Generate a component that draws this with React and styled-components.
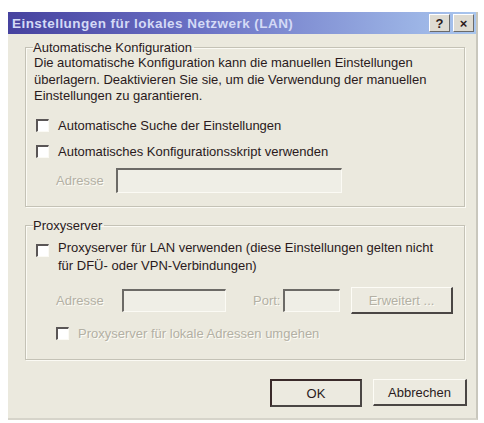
import React from "react";
import styled, { createGlobalStyle } from "styled-components";

const GlobalStyle = createGlobalStyle`
  html, body {
    margin: 0;
    padding: 0;
    background: #ffffff;
  }
  body {
    font-family: "Liberation Sans", Arial, sans-serif;
    font-size: 13px;
  }
`;

const App = () => {
  return (
    <>
      <GlobalStyle />
      <Page>
        <Dialog>
          <TitleBar>
            <TitleText>Einstellungen für lokales Netzwerk (LAN)</TitleText>
            <TitleButtons>
              <CaptionButton>?</CaptionButton>
              <CaptionButton>×</CaptionButton>
            </TitleButtons>
          </TitleBar>

          <Body>
            <Group height="167px">
              <Legend>Automatische Konfiguration</Legend>
              <Description>
                Die automatische Konfiguration kann die manuellen Einstellungen
                überlagern. Deaktivieren Sie sie, um die Verwendung der manuellen
                Einstellungen zu garantieren.
              </Description>
              <CheckRow marginTop="13px">
                <CheckBox />
                <Label>Automatische Suche der Einstellungen</Label>
              </CheckRow>
              <CheckRow marginTop="10px">
                <CheckBox />
                <Label>Automatisches Konfigurationsskript verwenden</Label>
              </CheckRow>
              <FieldRow marginTop="8px" indent="22px">
                <DisabledLabel width="60px">Adresse</DisabledLabel>
                <TextField width="226px" height="25px" />
              </FieldRow>
            </Group>

            <Group height="142px" marginTop="11px">
              <Legend>Proxyserver</Legend>
              <CheckRow marginTop="6px" align="flex-start">
                <CheckBox marginTop="5px" />
                <Label multiline>
                  Proxyserver für LAN verwenden (diese Einstellungen gelten nicht
                  für DFÜ- oder VPN-Verbindungen)
                </Label>
              </CheckRow>
              <FieldRow marginTop="12px" indent="22px">
                <DisabledLabel width="66px">Adresse</DisabledLabel>
                <TextField width="104px" />
                <DisabledLabel width="30px" marginLeft="27px">
                  Port:
                </DisabledLabel>
                <TextField width="57px" />
                <PushButton disabled width="102px" marginLeft="11px">
                  Erweitert ...
                </PushButton>
              </FieldRow>
              <CheckRow marginTop="12px" indent="22px">
                <CheckBox />
                <DisabledLabel>Proxyserver für lokale Adressen umgehen</DisabledLabel>
              </CheckRow>
            </Group>

            <ButtonBar>
              <PushButton isDefault width="92px">
                OK
              </PushButton>
              <PushButton width="94px">Abbrechen</PushButton>
            </ButtonBar>
          </Body>
        </Dialog>
      </Page>
    </>
  );
};

export default App;

const Page = styled.div`
  width: 484px;
  height: 423px;
  padding: 12px 6px 0 8px;
  box-sizing: border-box;
  overflow: hidden;
`;

const Dialog = styled.div`
  width: 470px;
  height: 408px;
  background-color: #ebe9de;
  border-right: 2px solid #c9c7bd;
  border-bottom: 2px solid #d6d4ca;
  box-sizing: border-box;
  display: flex;
  flex-direction: column;
`;

const TitleBar = styled.div`
  height: 22px;
  flex-shrink: 0;
  display: flex;
  align-items: center;
  justify-content: space-between;
  padding: 0 2px 0 4px;
  background: linear-gradient(90deg, #46429f 0%, #6a70c4 40%, #a9c6ee 100%);
`;

const TitleText = styled.span`
  color: #d4daf6;
  font-weight: bold;
  font-size: 13.5px;
  letter-spacing: 0.45px;
  white-space: nowrap;
`;

const TitleButtons = styled.div`
  display: flex;
  gap: 3px;
`;

const CaptionButton = styled.div`
  width: 19px;
  height: 16px;
  display: flex;
  align-items: center;
  justify-content: center;
  background-color: #dedbd2;
  border-top: 1px solid #ffffff;
  border-left: 1px solid #ffffff;
  border-right: 1px solid #6a6a6a;
  border-bottom: 1px solid #6a6a6a;
  font-weight: bold;
  font-size: 13px;
  color: #2a1a1c;
  line-height: 1;
`;

const Body = styled.div`
  flex: 1;
  display: flex;
  flex-direction: column;
  padding: 6px 11px 0 17px;
`;

const Group = styled.fieldset`
  margin: ${(props) => props.marginTop || "0"} 0 0 0;
  padding: 0 10px 0 8px;
  height: ${(props) => props.height};
  box-sizing: border-box;
  border: 1px solid #c4c2b6;
  box-shadow: inset 1px 1px 0 #fbfaf4, 1px 1px 0 #fbfaf4;
  display: flex;
  flex-direction: column;
  min-width: 0;
`;

const Legend = styled.legend`
  padding: 0 2px 0 0;
  margin-left: -1px;
  color: #2a1a1c;
  font-size: 13px;
  line-height: 15px;
`;

const Description = styled.p`
  margin: 0;
  color: #2a1a1c;
  font-size: 13px;
  line-height: 16.5px;
  width: 405px;
`;

const CheckRow = styled.div`
  display: flex;
  align-items: ${(props) => props.align || "center"};
  margin-top: ${(props) => props.marginTop || "0"};
  padding-left: ${(props) => props.indent || "2px"};
  gap: 9px;
`;

const CheckBox = styled.span`
  width: 10px;
  height: 10px;
  flex-shrink: 0;
  margin-top: ${(props) => props.marginTop || "0"};
  background-color: #ffffff;
  border-top: 2px solid #5a5656;
  border-left: 2px solid #5a5656;
  border-right: 1px solid #fbfaf4;
  border-bottom: 1px solid #fbfaf4;
`;

const Label = styled.span`
  color: #2a1a1c;
  font-size: 13px;
  line-height: ${(props) => (props.multiline ? "18px" : "16px")};
  white-space: ${(props) => (props.multiline ? "normal" : "nowrap")};
  max-width: ${(props) => (props.multiline ? "376px" : "none")};
`;

const DisabledLabel = styled.span`
  display: inline-block;
  width: ${(props) => props.width || "auto"};
  margin-left: ${(props) => props.marginLeft || "0"};
  color: #b3b0a4;
  text-shadow: 1px 1px 0 #fdfcf6;
  font-size: 13px;
  white-space: nowrap;
  flex-shrink: 0;
`;

const FieldRow = styled.div`
  display: flex;
  align-items: center;
  margin-top: ${(props) => props.marginTop || "0"};
  padding-left: ${(props) => props.indent || "0"};
`;

const TextField = styled.div`
  width: ${(props) => props.width};
  height: ${(props) => props.height || "23px"};
  flex-shrink: 0;
  box-sizing: border-box;
  background-color: #efeee6;
  border-top: 2px solid #6c6a66;
  border-left: 2px solid #6c6a66;
  border-right: 1px solid #fbfaf4;
  border-bottom: 1px solid #fbfaf4;
`;

const PushButton = styled.div`
  width: ${(props) => props.width};
  height: ${(props) => (props.isDefault ? "28px" : "27px")};
  margin-left: ${(props) => props.marginLeft || "0"};
  box-sizing: border-box;
  flex-shrink: 0;
  display: flex;
  align-items: center;
  justify-content: center;
  background-color: #eceae0;
  font-size: 13px;
  color: ${(props) => (props.disabled ? "#b3b0a4" : "#2a1a1c")};
  text-shadow: ${(props) => (props.disabled ? "1px 1px 0 #fdfcf6" : "none")};
  border-top: ${(props) => (props.isDefault ? "2px solid #3a2a2a" : "1px solid #fdfcf6")};
  border-left: ${(props) => (props.isDefault ? "2px solid #3a2a2a" : "1px solid #fdfcf6")};
  border-right: 2px solid #4a4644;
  border-bottom: 2px solid #4a4644;
`;

const ButtonBar = styled.div`
  display: flex;
  justify-content: flex-end;
  gap: 11px;
  margin-top: 19px;
  padding-right: 0;
  margin-right: -2px;
`;
